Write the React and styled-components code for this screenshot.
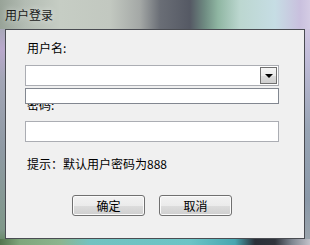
import React from "react";
import styled, { createGlobalStyle } from "styled-components";

const Global = createGlobalStyle`
  html, body { margin: 0; padding: 0; width: 310px; height: 245px; overflow: hidden; }
  body { font-family: "Noto Sans CJK SC", "Noto Sans", sans-serif; }
`;

const Window = styled.div`
  width: 310px;
  height: 245px;
  display: flex;
  flex-direction: column;
  background: linear-gradient(
    90deg,
    #98a398 0px,
    #b3bcb3 25px,
    #c6cdc4 60px,
    #c2c8c0 110px,
    #a4a8a6 140px,
    #6a6e76 160px,
    #555964 190px,
    #6f8c82 205px,
    #8fb6a2 218px,
    #bcd7d0 240px,
    #c6dde4 275px,
    #c9c0de 300px,
    #d4cce4 310px
  );
`;

const TitleBar = styled.div`
  height: 29px;
  box-sizing: border-box;
  padding: 7px 0 0 5px;
  font-size: 12px;
  line-height: 16px;
  color: #1a1a1a;
  text-shadow: 0 0 6px rgba(255, 255, 255, 0.7);
`;

const Middle = styled.div`
  display: flex;
  height: 210px;
`;

const Edge = styled.div`
  width: 5px;
  background: ${(p) =>
    p.$side === "left"
      ? "linear-gradient(180deg, #a8a8b8 0px, #b9a8cc 20px, #a3a6b6 50px, #8f9aa4 120px, #80988a 200px, #6c8c6c 210px)"
      : "linear-gradient(180deg, #cfc6e0 0px, #c0bcd8 30px, #98a4b4 100px, #8a98a8 170px, #9aa4ac 210px)"};
`;

const Client = styled.div`
  flex: 1;
  box-sizing: border-box;
  position: relative;
  background: #f0f0f0;
  border: 1px solid #4a4c52;
  padding: 10px 0 0 19px;
  display: flex;
  flex-direction: column;
  align-items: flex-start;
`;

const BottomFrame = styled.div`
  height: 6px;
  background: linear-gradient(
    90deg,
    #54744f 0px,
    #7fa67c 20px,
    #8cb48e 60px,
    #72c2c0 90px,
    #6cc4c6 190px,
    #48a6b0 235px,
    #2a2f38 255px,
    #30343c 275px,
    #7e8690 292px,
    #c2c2ca 310px
  );
`;

const Label = styled.div`
  font-size: 12px;
  line-height: 16px;
  height: 16px;
  margin: ${(p) => p.$mt || 0}px 0 0 2px;
  color: #000;
  white-space: nowrap;
`;

const ComboWrap = styled.div`
  position: relative;
  margin-top: 9px;
  width: 254px;
  height: 21px;
`;

const Combo = styled.div`
  box-sizing: border-box;
  width: 254px;
  height: 21px;
  background: #fff;
  border: 1px solid #abadb3;
  display: flex;
  justify-content: flex-end;
  padding: 1px;
`;

const DropButton = styled.div`
  box-sizing: border-box;
  width: 17px;
  height: 17px;
  border: 1px solid #707070;
  background: linear-gradient(180deg, #f5f5f5 0%, #ebebeb 50%, #dcdcdc 51%, #cfcfcf 100%);
  display: flex;
  align-items: center;
  justify-content: center;
`;

const Arrow = styled.div`
  width: 0;
  height: 0;
  border-left: 4px solid transparent;
  border-right: 4px solid transparent;
  border-top: 4px solid #000;
  margin-top: 1px;
`;

const DropList = styled.div`
  position: absolute;
  left: 0;
  top: 23px;
  box-sizing: border-box;
  width: 254px;
  height: 16px;
  background: #fff;
  border: 1px solid #828790;
  z-index: 2;
`;

const Input = styled.div`
  box-sizing: border-box;
  margin-top: ${(p) => p.$mt || 0}px;
  width: 254px;
  height: 21px;
  background: #fff;
  border: 1px solid #abadb3;
`;

const Buttons = styled.div`
  display: flex;
  gap: 14px;
  margin: 23px 0 0 47px;
`;

const Button = styled.div`
  box-sizing: border-box;
  width: 73px;
  height: 21px;
  border: 1px solid #707070;
  border-radius: 3px;
  background: linear-gradient(180deg, #f2f2f2 0%, #ebebeb 50%, #dddddd 51%, #cfcfcf 100%);
  box-shadow: inset 0 0 0 1px #fbfbfb;
  font-size: 12px;
  line-height: 19px;
  text-align: center;
  color: #000;
`;

export default function App() {
  return (
    <>
      <Global />
      <Window>
        <TitleBar>用户登录</TitleBar>
        <Middle>
          <Edge $side="left" />
          <Client>
            <Label>用户名:</Label>
            <ComboWrap>
              <Combo>
                <DropButton>
                  <Arrow />
                </DropButton>
              </Combo>
              <DropList />
            </ComboWrap>
            <Label $mt={11}>密码:</Label>
            <Input $mt={8} />
            <Label $mt={14}>提示：默认用户密码为888</Label>
            <Buttons>
              <Button>确定</Button>
              <Button>取消</Button>
            </Buttons>
          </Client>
          <Edge $side="right" />
        </Middle>
        <BottomFrame />
      </Window>
    </>
  );
}
